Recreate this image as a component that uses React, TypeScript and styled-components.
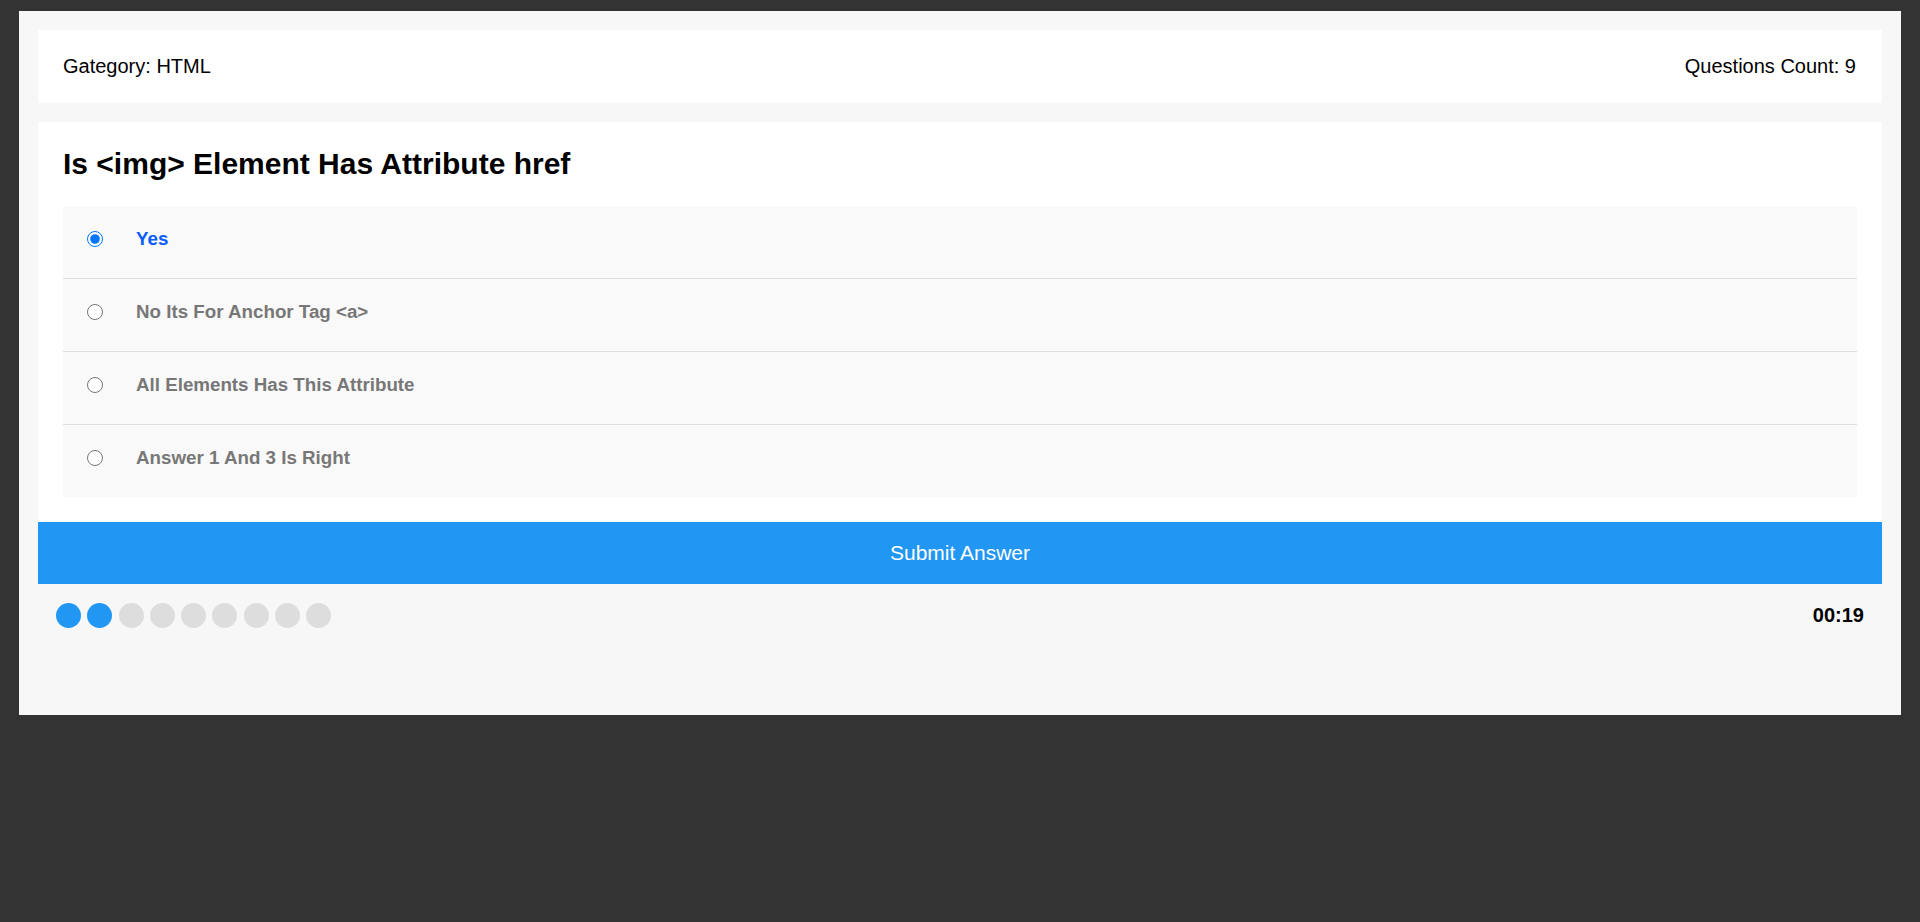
import React from "react";
import styled, { createGlobalStyle } from "styled-components";

const GlobalStyle = createGlobalStyle`
  * { box-sizing: border-box; }
  html, body {
    margin: 0;
    padding: 0;
    background: #333333;
    font-family: "Liberation Sans", Arial, sans-serif;
  }
  body { min-height: 100vh; }
`;

const QuizApp = styled.div`
  margin: 11px 19px 0;
  background: #f7f7f7;
  padding: 19px;
`;

const Info = styled.div`
  display: flex;
  justify-content: space-between;
  align-items: center;
  height: 73px;
  padding: 0 26px 0 25px;
  background: #ffffff;
  color: #000;
  font-size: 20px;
`;

const QuizArea = styled.div`
  margin-top: 19px;
  background: #ffffff;
  padding: 25px;
`;

const Title = styled.h2`
  margin: 0 0 25px;
  font-size: 30px;
  line-height: 34px;
  font-weight: bold;
  color: #000;
`;

const Answers = styled.div`
  display: flex;
  flex-direction: column;
`;

const Answer = styled.div<{ $last?: boolean }>`
  display: flex;
  align-items: center;
  box-sizing: content-box;
  height: 65px;
  padding: 0 25px 7px 24px;
  background: #f9f9f9;
  border-bottom: ${(p) => (p.$last ? "none" : "1px solid #dfdfdf")};
`;

const Radio = styled.input`
  width: 16px;
  height: 16px;
  margin: 0;
  accent-color: #0075ff;
`;

const Label = styled.label<{ $checked?: boolean }>`
  margin-left: 33px;
  font-size: 18.75px;
  font-weight: bold;
  color: ${(p) => (p.$checked ? "#0a5cff" : "#777777")};
`;

const SubmitButton = styled.button`
  display: block;
  width: 100%;
  height: 62px;
  border: none;
  background: #2196f3;
  color: #ffffff;
  font-family: inherit;
  font-size: 21px;
`;

const Footer = styled.div`
  display: flex;
  justify-content: space-between;
  align-items: flex-start;
  height: 112px;
  padding: 19px 18px 0 18px;
`;

const Bullets = styled.div`
  display: flex;
  gap: 6.25px;
`;

const Bullet = styled.span<{ $on?: boolean }>`
  width: 25px;
  height: 25px;
  border-radius: 50%;
  background: ${(p) => (p.$on ? "#2196f3" : "#dddddd")};
`;

const Timer = styled.div`
  font-size: 20px;
  line-height: 25px;
  font-weight: bold;
  color: #000;
`;

const answers = [
  "Yes",
  "No Its For Anchor Tag <a>",
  "All Elements Has This Attribute",
  "Answer 1 And 3 Is Right",
];

export default function App() {
  const [selected, setSelected] = React.useState(0);
  return (
    <>
      <GlobalStyle />
      <QuizApp>
        <Info>
          <span>Gategory: HTML</span>
          <span>Questions Count: 9</span>
        </Info>
        <QuizArea>
          <Title>Is &lt;img&gt; Element Has Attribute href</Title>
          <Answers>
            {answers.map((a, i) => (
              <Answer key={i} $last={i === answers.length - 1}>
                <Radio
                  type="radio"
                  name="question"
                  id={`answer_${i}`}
                  checked={selected === i}
                  onChange={() => setSelected(i)}
                />
                <Label htmlFor={`answer_${i}`} $checked={selected === i}>
                  {a}
                </Label>
              </Answer>
            ))}
          </Answers>
        </QuizArea>
        <SubmitButton>Submit Answer</SubmitButton>
        <Footer>
          <Bullets>
            {Array.from({ length: 9 }).map((_, i) => (
              <Bullet key={i} $on={i < 2} />
            ))}
          </Bullets>
          <Timer>00:19</Timer>
        </Footer>
      </QuizApp>
    </>
  );
}
